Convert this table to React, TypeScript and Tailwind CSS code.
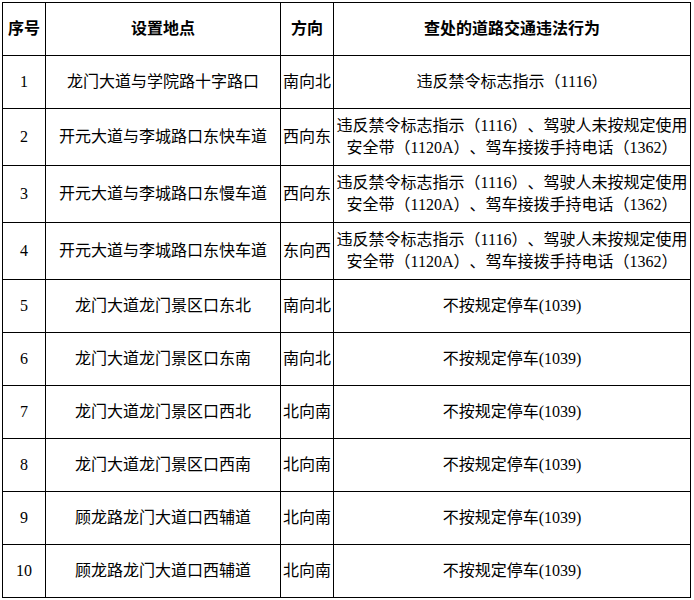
import React from "react";

type Row = { no: string; place: string; dir: string; act: React.ReactNode; tall?: boolean };

const longAct = (
  <>
    违反禁令标志指示（1116）、驾驶人未按规定使用
    <br />
    安全带（1120A）、驾车接拨手持电话（1362）
  </>
);

const rows: Row[] = [
  { no: "1", place: "龙门大道与学院路十字路口", dir: "南向北", act: "违反禁令标志指示（1116）" },
  { no: "2", place: "开元大道与李城路口东快车道", dir: "西向东", act: longAct, tall: true },
  { no: "3", place: "开元大道与李城路口东慢车道", dir: "西向东", act: longAct, tall: true },
  { no: "4", place: "开元大道与李城路口东快车道", dir: "东向西", act: longAct, tall: true },
  { no: "5", place: "龙门大道龙门景区口东北", dir: "南向北", act: "不按规定停车(1039)" },
  { no: "6", place: "龙门大道龙门景区口东南", dir: "南向北", act: "不按规定停车(1039)" },
  { no: "7", place: "龙门大道龙门景区口西北", dir: "北向南", act: "不按规定停车(1039)" },
  { no: "8", place: "龙门大道龙门景区口西南", dir: "北向南", act: "不按规定停车(1039)" },
  { no: "9", place: "顾龙路龙门大道口西辅道", dir: "北向南", act: "不按规定停车(1039)" },
  { no: "10", place: "顾龙路龙门大道口西辅道", dir: "北向南", act: "不按规定停车(1039)" },
];

const font = { fontFamily: '"Liberation Serif", "Noto Sans CJK SC", serif' };

export default function App() {
  const cell =
    "border-r border-b border-black flex items-center justify-center text-center whitespace-nowrap overflow-hidden [text-spacing-trim:space-all]";
  return (
    <div className="w-[694px] h-[600px] bg-white pl-[2px] pt-[2px] text-black text-[16px]" style={font}>
      <div className="grid grid-cols-[43px_235px_53px_357px] w-[689px] border-l border-t border-black">
        <div className={`${cell} h-[53px] font-bold`}>序号</div>
        <div className={`${cell} h-[53px] font-bold`}>设置地点</div>
        <div className={`${cell} h-[53px] font-bold`}>方向</div>
        <div className={`${cell} h-[53px] font-bold`}>查处的道路交通违法行为</div>
        {rows.map((r) => {
          const h = r.tall ? "h-[57px]" : "h-[53px]";
          return (
            <React.Fragment key={r.no}>
              <div className={`${cell} ${h}`}>{r.no}</div>
              <div className={`${cell} ${h}`}>{r.place}</div>
              <div className={`${cell} ${h}`}>{r.dir}</div>
              <div className={`${cell} ${h} leading-[22px]`}>{r.act}</div>
            </React.Fragment>
          );
        })}
      </div>
    </div>
  );
}
